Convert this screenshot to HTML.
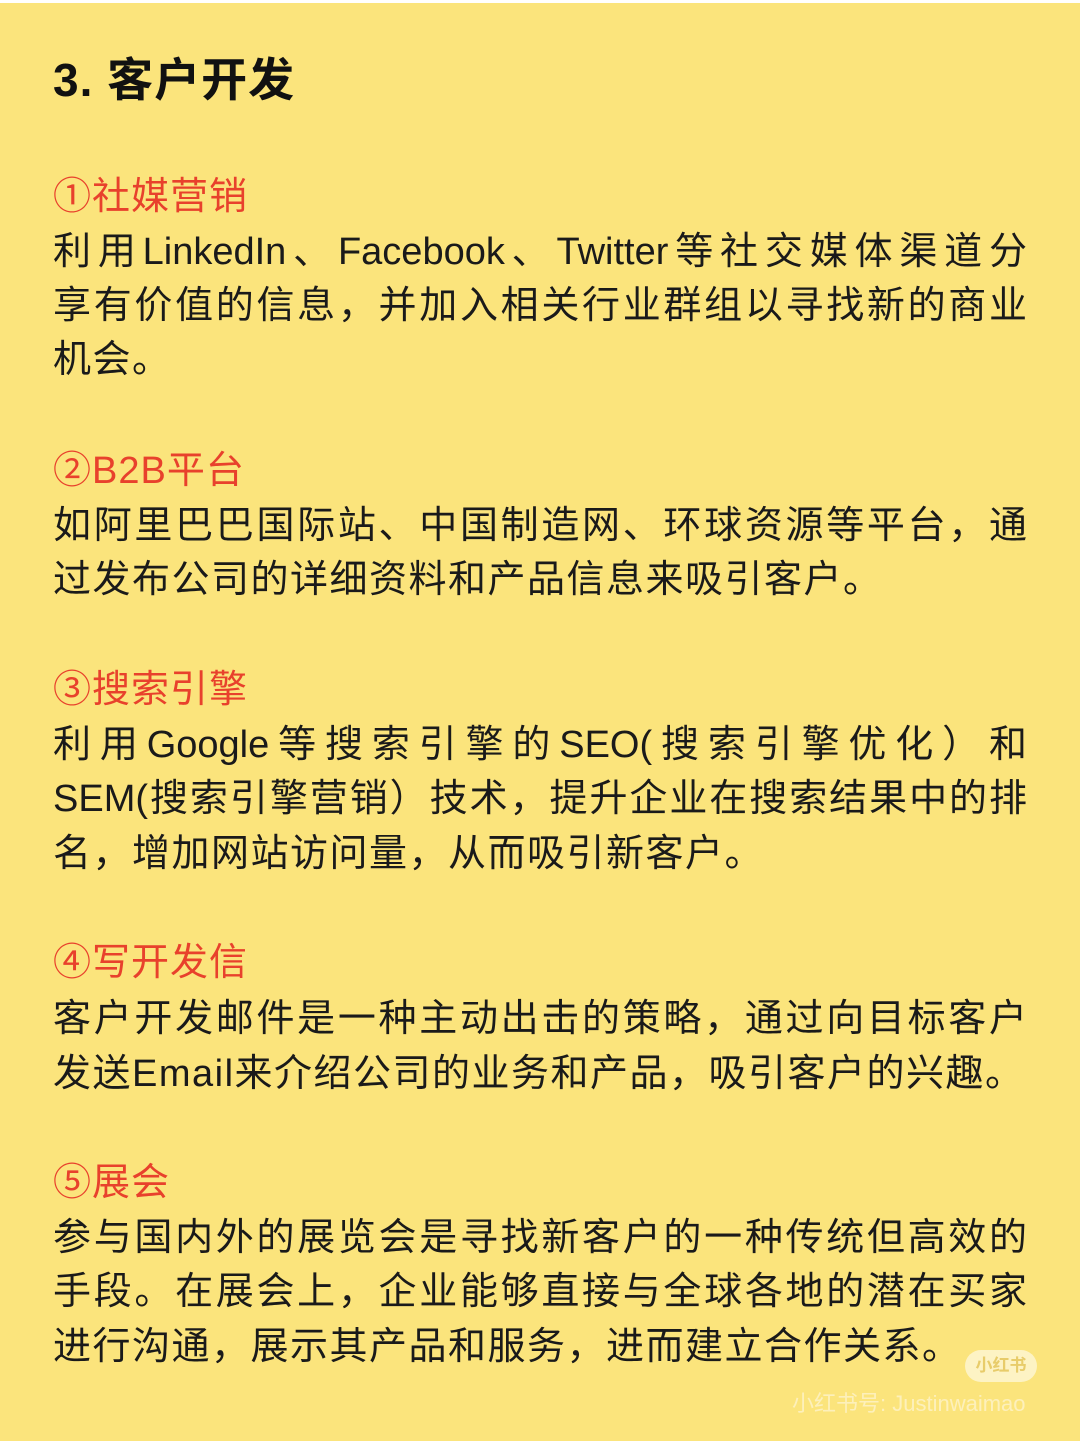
<!DOCTYPE html>
<html><head><meta charset="utf-8"><style>
html,body{margin:0;padding:0}
body{width:1080px;height:1444px;background:#fff;position:relative;overflow:hidden;font-family:"Liberation Sans","Noto Sans CJK SC",sans-serif}
.bg{position:absolute;left:0;top:3px;width:1080px;height:1438px;background:#fbe47c}
.l{position:absolute;left:53px;width:974px;height:54px;line-height:54px;font-size:38px;color:#1a1a1a;white-space:nowrap;letter-spacing:1.5px}
.j{text-align:justify;text-align-last:justify;letter-spacing:0}
.h{color:#e8412c;font-size:38px;letter-spacing:1px}
.t{position:absolute;left:53px;top:50px;font-size:46px;font-weight:bold;color:#111;line-height:60px;letter-spacing:1px}
.badge{position:absolute;left:965px;top:1350px;width:72px;height:32px;border-radius:16px;background:#fdf3c4;color:#e8cc6a;font-size:17px;font-weight:bold;text-align:center;line-height:32px}
.wm{position:absolute;left:792px;top:1390px;font-size:22px;color:#fdf0bb;line-height:28px}
</style></head><body>
<div class="bg"></div>
<div class="t">3. 客户开发</div>
<div class="l h" style="top:170px">①社媒营销</div>
<div class="l j" style="top:225px">利用LinkedIn、Facebook、Twitter等社交媒体渠道分</div>
<div class="l j" style="top:279px">享有价值的信息，并加入相关行业群组以寻找新的商业</div>
<div class="l" style="top:333px">机会。</div>
<div class="l h" style="top:444px">②B2B平台</div>
<div class="l j" style="top:499px">如阿里巴巴国际站、中国制造网、环球资源等平台，通</div>
<div class="l" style="top:553px">过发布公司的详细资料和产品信息来吸引客户。</div>
<div class="l h" style="top:663px">③搜索引擎</div>
<div class="l j" style="top:718px">利用Google等搜索引擎的SEO(搜索引擎优化）和</div>
<div class="l j" style="top:772px">SEM(搜索引擎营销）技术，提升企业在搜索结果中的排</div>
<div class="l" style="top:827px">名，增加网站访问量，从而吸引新客户。</div>
<div class="l h" style="top:936px">④写开发信</div>
<div class="l j" style="top:992px">客户开发邮件是一种主动出击的策略，通过向目标客户</div>
<div class="l" style="top:1047px">发送Email来介绍公司的业务和产品，吸引客户的兴趣。</div>
<div class="l h" style="top:1156px">⑤展会</div>
<div class="l j" style="top:1211px">参与国内外的展览会是寻找新客户的一种传统但高效的</div>
<div class="l j" style="top:1265px">手段。在展会上，企业能够直接与全球各地的潜在买家</div>
<div class="l" style="top:1320px">进行沟通，展示其产品和服务，进而建立合作关系。</div>
<div class="badge">小红书</div>
<div class="wm">小红书号: Justinwaimao</div>
</body></html>
